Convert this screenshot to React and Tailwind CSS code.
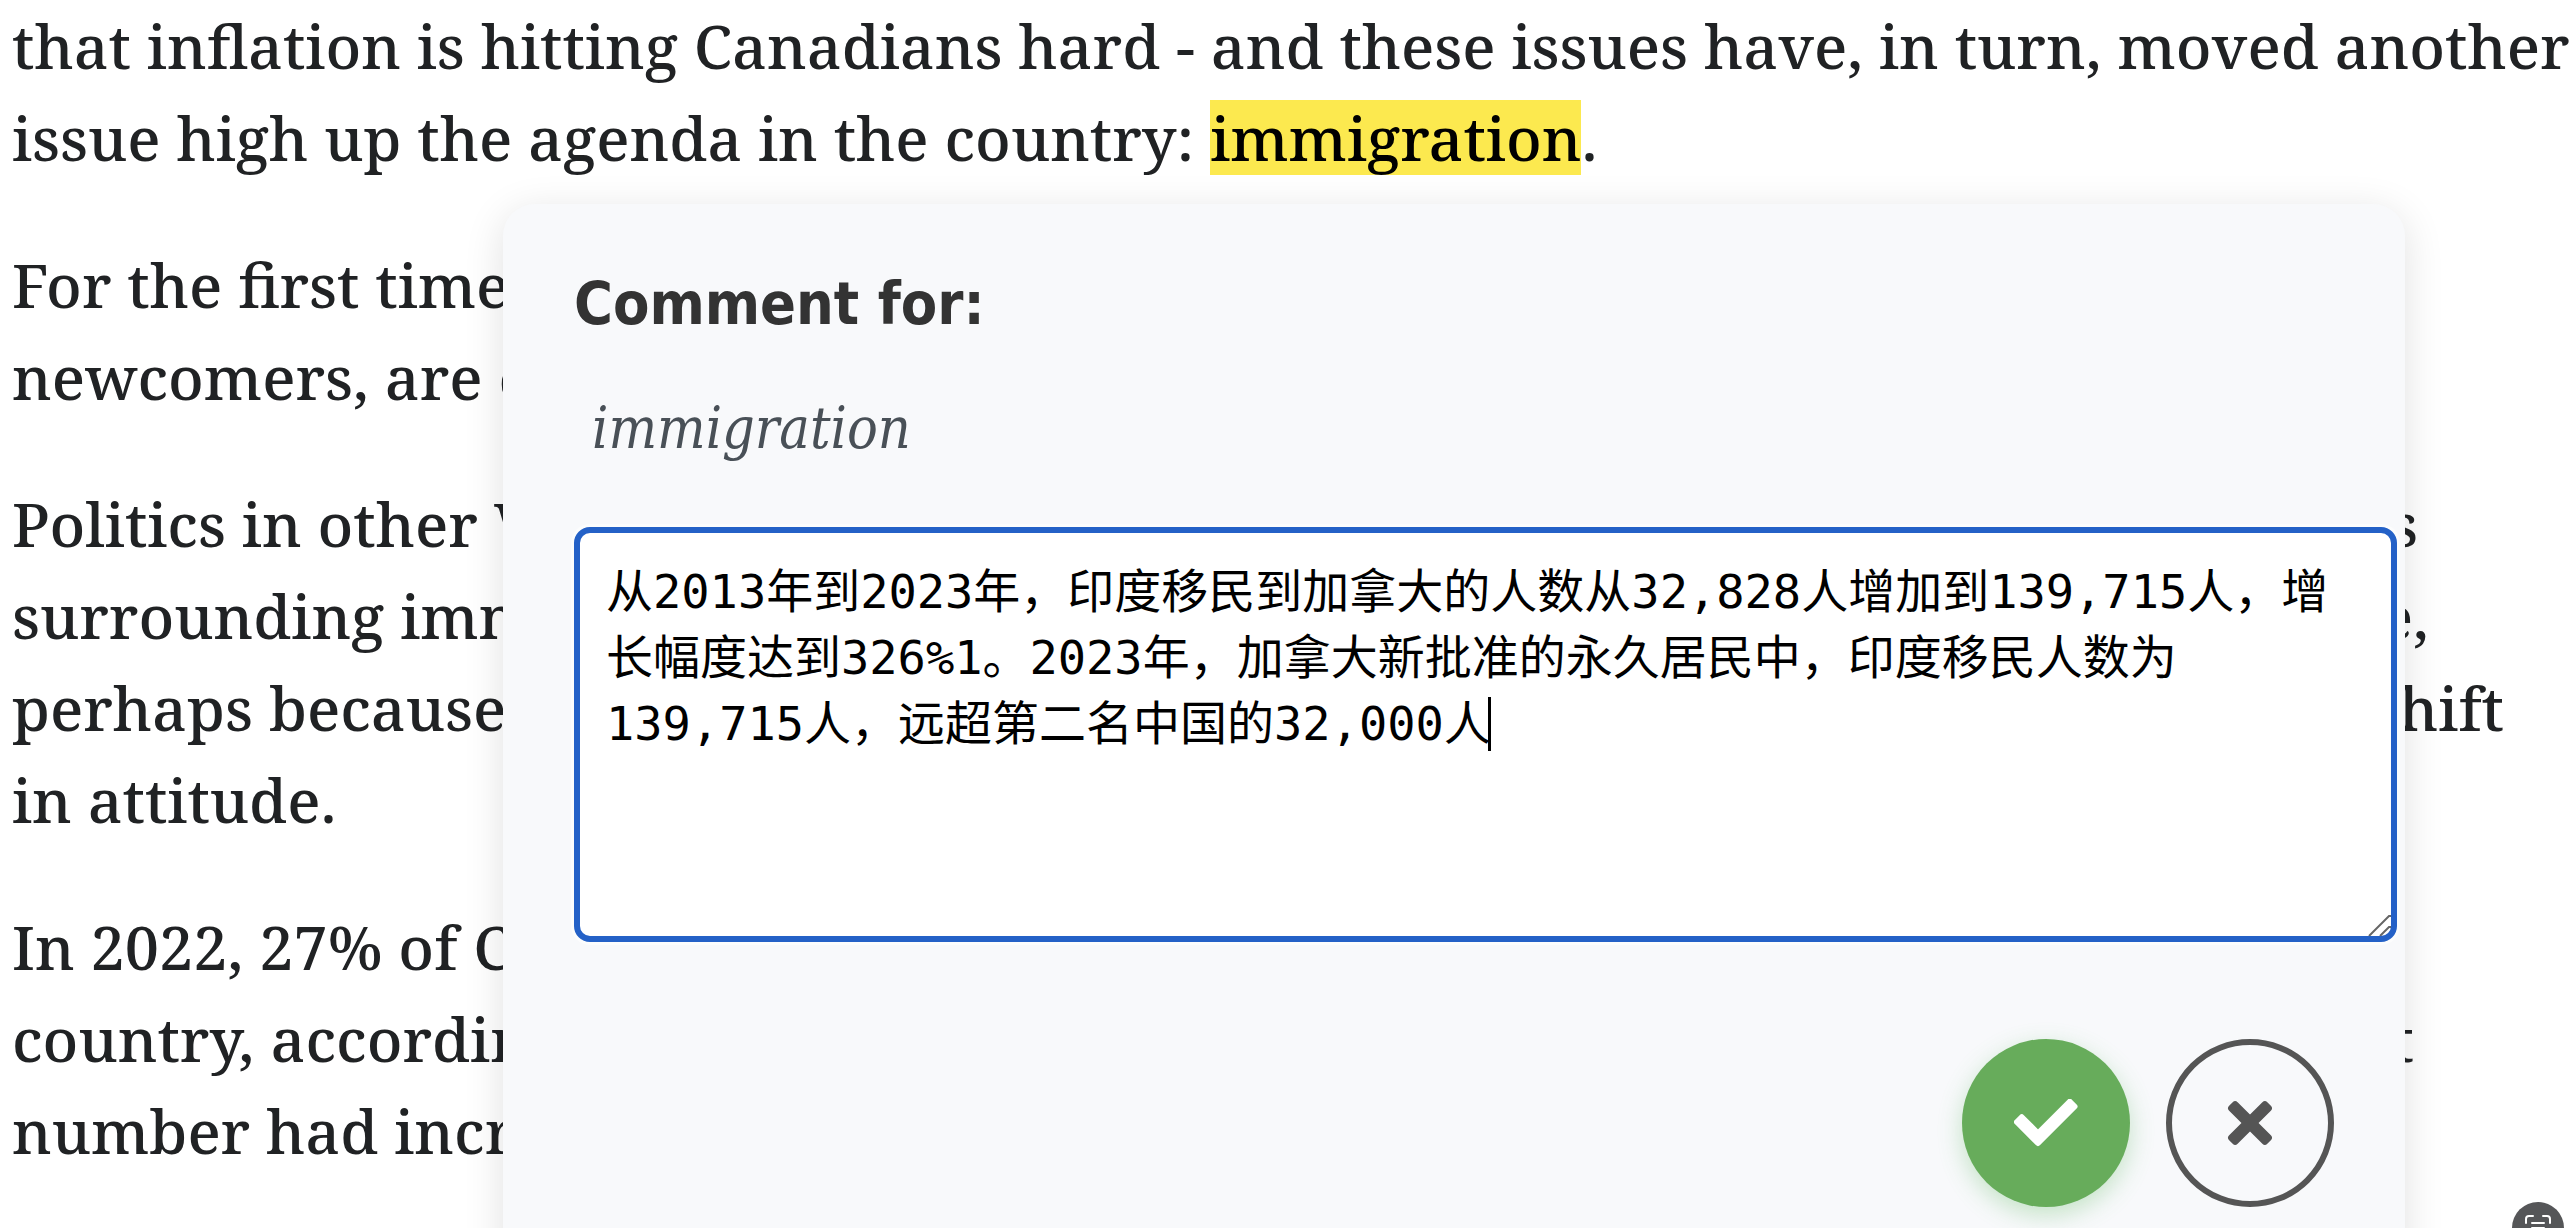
const paragraphs = [
  [
    { start: "For the first time" },
    { start: "newcomers, are c" },
  ],
  [
    { start: "Politics in other W", end: "s", inset: "pr-[142px]" },
    { start: "surrounding imm", end: "e,", inset: "pr-[131px]" },
    { start: "perhaps because", end: "shift", inset: "pr-[56px]" },
    { start: "in attitude." },
  ],
  [
    { start: "In 2022, 27% of C" },
    { start: "country, accordin", end: "t", inset: "pr-[146px]" },
    { start: "number had incr" },
  ],
];

const comment =
  "从2013年到2023年，印度移民到加拿大的人数从32,828人增加到139,715人，增长幅度达到326%1。2023年，加拿大新批准的永久居民中，印度移民人数为139,715人，远超第二名中国的32,000人";

function Line({ start, end, inset = "" }) {
  return (
    <span className={`flex justify-between ${inset}`}>
      <span>{start}</span>
      {end && <span>{end}</span>}
    </span>
  );
}

function Article() {
  return (
    <article className="flex flex-col gap-[55px] px-3 whitespace-nowrap font-['Noto_Serif','DejaVu_Serif_Condensed',serif] text-[61px] leading-[92px] font-medium text-[#202224]">
      <p>
        that inflation is hitting Canadians hard - and these issues have, in turn, moved another
        <br />
        issue high up the agenda in the country:{" "}
        <mark className="inline-block bg-[#fce94f] leading-[75px] text-black">immigration</mark>.
      </p>
      {paragraphs.map((lines) => (
        <p key={lines[0].start}>
          {lines.map((line) => (
            <Line key={line.start} {...line} />
          ))}
        </p>
      ))}
    </article>
  );
}

function CommentBox() {
  return (
    <div className="relative mt-[61px] -mr-[63px]">
      <textarea
        id="comment"
        defaultValue={comment}
        spellCheck={false}
        className="block h-[415px] w-full resize-none overflow-hidden rounded-2xl border-6 border-[#2461c7] bg-white px-[26px] py-[26px] font-['DejaVu_Sans_Mono','Noto_Sans_CJK_SC',monospace] text-[47px] leading-[66px] text-black caret-transparent ring-3 ring-white/60 outline-none"
      />
      <span className="absolute top-[170px] left-[914px] h-[54px] w-[3px] bg-black" aria-hidden="true" />
      <svg className="absolute right-1.5 bottom-1.5 size-6" viewBox="0 0 24 24" fill="none" stroke="#666" strokeWidth="2" aria-hidden="true">
        <path d="M2 24 22 4h2M13 24l9-9h2" />
      </svg>
    </div>
  );
}

function CommentDialog() {
  return (
    <section
      role="dialog"
      aria-label="Comment"
      className="absolute top-[204px] right-[167px] left-[503px] flex flex-col rounded-[32px] bg-[#f8f9fb] px-[71px] pt-[70px] pb-18 shadow-[0_8px_40px_rgba(0,0,0,0.12)]"
    >
      <label htmlFor="comment" className="font-['DejaVu_Sans_Condensed','DejaVu_Sans',sans-serif] text-[59px] leading-[60px] font-bold text-[#333]">
        Comment for:
      </label>
      <p className="mt-14 px-[18px] font-['DejaVu_Serif_Condensed','DejaVu_Serif',serif] text-[57px] leading-[76px] text-[#495057] italic">
        immigration
      </p>
      <CommentBox />
      <div className="mt-[97px] flex justify-end gap-9">
        <button type="button" aria-label="Save comment" className="grid size-[168px] place-items-center rounded-full bg-[#67ac5b] shadow-[0_8px_24px_rgba(76,175,80,0.3)]">
          <svg className="h-12 w-16" viewBox="0 0 64 48" fill="#fff" stroke="#fff" strokeWidth="6" strokeLinejoin="round">
            <path d="M24 44 3 23l4.75-4.75L24 34.5 55.75 2.75 60.5 7.5Z" />
          </svg>
        </button>
        <button type="button" aria-label="Cancel" className="grid size-[168px] place-items-center rounded-full border-6 border-[#555]">
          <svg className="size-12" viewBox="-24 -24 48 48" fill="#555">
            <rect x="-27" y="-6" width="54" height="12" rx="3.5" transform="rotate(45)" />
            <rect x="-27" y="-6" width="54" height="12" rx="3.5" transform="rotate(-45)" />
          </svg>
        </button>
      </div>
    </section>
  );
}

export default function App() {
  return (
    <main className="relative h-screen overflow-hidden bg-white">
      <Article />
      <CommentDialog />
      <button type="button" aria-label="Capture text" className="absolute right-2 -bottom-[26px] grid size-[52px] place-items-center rounded-full bg-[#555658]">
        <svg className="size-7" viewBox="0 0 28 28" fill="none" stroke="#fff" strokeWidth="2" strokeLinecap="round">
          <path d="M2 9V5a3 3 0 0 1 3-3h4M19 2h4a3 3 0 0 1 3 3v4M26 19v4a3 3 0 0 1-3 3h-4M9 26H5a3 3 0 0 1-3-3v-4M8 9h12M8 14h12M8 19h12" />
        </svg>
      </button>
    </main>
  );
}
